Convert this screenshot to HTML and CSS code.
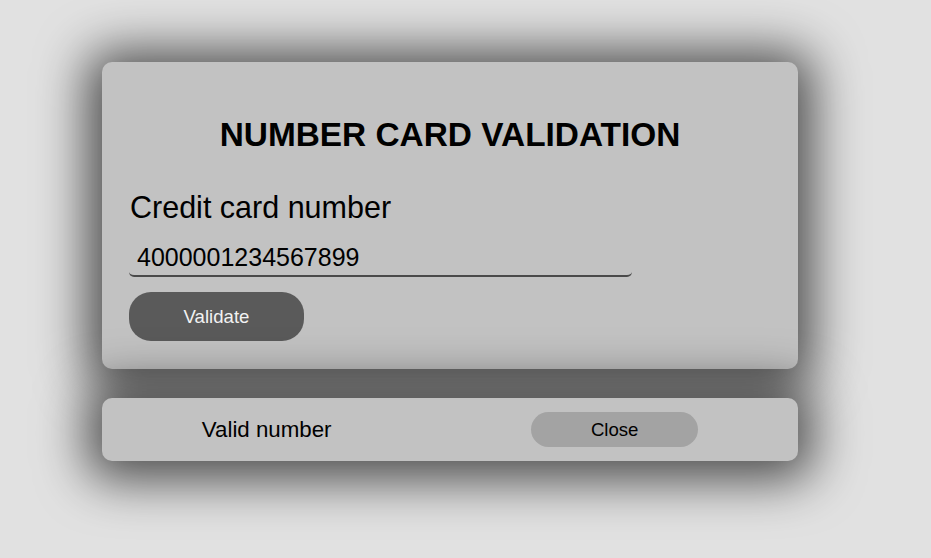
FILE: index.html
```html
<!DOCTYPE html>
<html lang="en">
<head>
<meta charset="utf-8">
<title>Number card validation</title>
<link rel="stylesheet" href="styles.css">
</head>
<body>
<main class="page">
  <section class="card form-card">
    <h1 class="title">NUMBER CARD VALIDATION</h1>
    <label class="label" for="cc">Credit card number</label>
    <input class="cc-input" id="cc" type="text" value="4000001234567899">
    <button class="btn-validate" type="button">Validate</button>
  </section>
  <section class="card result-card">
    <span class="result-text">Valid number</span>
    <button class="btn-close" type="button">Close</button>
  </section>
</main>
</body>
</html>
```

FILE: styles.css
```css
html, body {
  margin: 0;
  padding: 0;
}
body {
  background: #e1e1e1;
  font-family: "Liberation Sans", Arial, sans-serif;
  color: #000;
  min-height: 558px;
}
.page {
  width: 696px;
  padding: 62px 0 0 102px;
  display: flex;
  flex-direction: column;
  gap: 29px;
}
.card {
  background: #c2c2c2;
  border-radius: 10px;
  box-shadow: 0 4px 50px 15px rgba(0, 0, 0, 0.66);
  box-sizing: border-box;
}
.form-card {
  height: 307px;
  padding: 54px 27px 28px;
  display: flex;
  flex-direction: column;
  align-items: flex-start;
}
.title {
  align-self: stretch;
  margin: 0 0 38px;
  font-size: 33.4px;
  font-weight: bold;
  text-align: center;
  line-height: 37px;
}
.label {
  font-size: 30.5px;
  line-height: 32px;
  margin-bottom: 15px;
  padding-left: 1px;
}
.cc-input {
  width: 503px;
  height: 39px;
  box-sizing: border-box;
  margin: 0 0 15px;
  padding: 4px 8px 2px;
  font-family: "Liberation Sans", Arial, sans-serif;
  font-size: 25px;
  color: #000;
  background: transparent;
  border: none;
  border-bottom: 2px solid #4a4a4a;
  border-radius: 5px;
  outline: none;
}
.btn-validate {
  width: 175px;
  height: 49px;
  border: none;
  border-radius: 22px;
  background: #5a5a5a;
  color: #f2f2f2;
  font-family: "Liberation Sans", Arial, sans-serif;
  font-size: 18.6px;
  padding: 0;
}
.result-card {
  height: 63px;
  display: flex;
  align-items: center;
  justify-content: space-around;
}
.result-text {
  font-size: 22.3px;
}
.btn-close {
  width: 167px;
  height: 35px;
  border: none;
  border-radius: 18px;
  background: #a3a3a3;
  color: #000;
  font-family: "Liberation Sans", Arial, sans-serif;
  font-size: 18.6px;
  padding: 0;
}
```
